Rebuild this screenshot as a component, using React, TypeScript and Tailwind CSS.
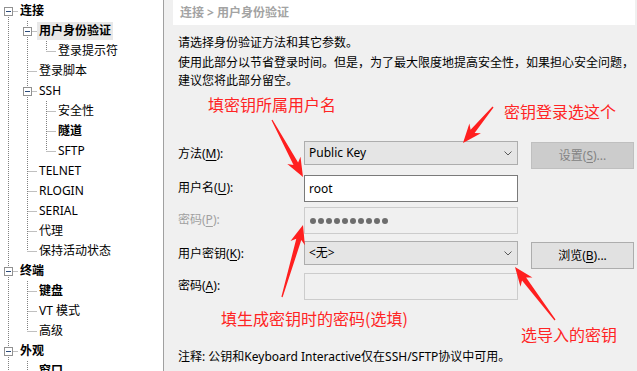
import React from "react";

type Node = { label: string; depth: number; box?: boolean; bold?: boolean; sel?: boolean };

const tree: Node[] = [
  { label: "连接", depth: 0, box: true, bold: true },
  { label: "用户身份验证", depth: 1, box: true, bold: true, sel: true },
  { label: "登录提示符", depth: 2 },
  { label: "登录脚本", depth: 1 },
  { label: "SSH", depth: 1, box: true },
  { label: "安全性", depth: 2 },
  { label: "隧道", depth: 2, bold: true },
  { label: "SFTP", depth: 2 },
  { label: "TELNET", depth: 1 },
  { label: "RLOGIN", depth: 1 },
  { label: "SERIAL", depth: 1 },
  { label: "代理", depth: 1 },
  { label: "保持活动状态", depth: 1 },
  { label: "终端", depth: 0, box: true, bold: true },
  { label: "键盘", depth: 1, bold: true },
  { label: "VT 模式", depth: 1 },
  { label: "高级", depth: 1 },
  { label: "外观", depth: 0, box: true, bold: true },
  { label: "窗口", depth: 1, bold: true },
];

// does the branch at level k still go on below row i?
function goesOn(i: number, k: number) {
  for (let j = i + 1; j < tree.length; j++) {
    if (tree[j].depth <= k) return tree[j].depth === k;
  }
  return true;
}

const dot = "#808080";

function TreeRow({ node, i }: { node: Node; i: number }) {
  const d = node.depth;
  const w = 19 * (d + 1);
  const guides = [];
  for (let k = 0; k < d; k++) {
    if (goesOn(i, k)) {
      const x = 8.5 + 19 * k;
      guides.push(<line key={k} x1={x} y1={0} x2={x} y2={20} stroke={dot} strokeDasharray="1 1" />);
    }
  }
  const x = 8.5 + 19 * d;
  return (
    <div className="flex h-[20px] items-center">
      <svg width={w} height={20} className="shrink-0">
        {guides}
        <line x1={x} y1={i === 0 ? 10 : 0} x2={x} y2={goesOn(i, d) ? 20 : 10} stroke={dot} strokeDasharray="1 1" />
        <line x1={x} y1={10.5} x2={19 * d + 18} y2={10.5} stroke={dot} strokeDasharray="1 1" />
        {node.box && (
          <g>
            <rect x={19 * d + 4.5} y={6.5} width={8} height={8} fill="#fff" stroke="#919191" />
            <line x1={19 * d + 6} y1={10.5} x2={19 * d + 11} y2={10.5} stroke="#2b4a7a" />
          </g>
        )}
      </svg>
      <span
        className={`-ml-[1px] h-[18px] whitespace-nowrap px-[2px] leading-[18px] text-black ${
          node.bold ? "font-bold" : ""
        } ${node.sel ? "bg-[#e8e8e8]" : ""}`}
      >
        {node.label}
      </span>
    </div>
  );
}

function Chevron() {
  return (
    <svg width="8" height="5" viewBox="0 0 8 5" className="shrink-0">
      <path d="M0.5 0.5 L4 4 L7.5 0.5" fill="none" stroke="#5a5a5a" />
    </svg>
  );
}

function Select({ value }: { value: string }) {
  return (
    <div className="flex h-[24px] w-[214px] items-center justify-between border border-[#adadad] bg-[#e5e5e5] pl-[4px] pr-[5px] text-black">
      <span>{value}</span>
      <Chevron />
    </div>
  );
}

function Label({ children, muted }: { children: React.ReactNode; muted?: boolean }) {
  return (
    <div className={`flex h-[26px] w-[126px] shrink-0 items-center ${muted ? "text-[#a0a0a0]" : "text-black"}`}>
      {children}
    </div>
  );
}

function Key({ k }: { k: string }) {
  return <span className="underline underline-offset-2">{k}</span>;
}

function arrow(tx: number, ty: number, px: number, py: number) {
  const dx = px - tx;
  const dy = py - ty;
  const len = Math.hypot(dx, dy);
  const ux = dx / len;
  const uy = dy / len;
  const nx = -uy;
  const ny = ux;
  const hl = 15;
  const neck = [px - ux * hl, py - uy * hl];
  const barb = [px - ux * (hl + 4), py - uy * (hl + 4)];
  const pts = [
    [tx + nx * 0.6, ty + ny * 0.6],
    [neck[0] + nx * 2.6, neck[1] + ny * 2.6],
    [barb[0] + nx * 7.5, barb[1] + ny * 7.5],
    [px, py],
    [barb[0] - nx * 7.5, barb[1] - ny * 7.5],
    [neck[0] - nx * 2.6, neck[1] - ny * 2.6],
    [tx - nx * 0.6, ty - ny * 0.6],
  ];
  return pts.map((p) => `${p[0].toFixed(1)},${p[1].toFixed(1)}`).join(" ");
}

export default function App() {
  return (
    <div
      className="relative flex h-[371px] w-[637px] overflow-hidden bg-[#f0f0f0] text-[12px]"
      style={{ fontFamily: '"Noto Sans", "Noto Sans CJK SC", sans-serif' }}
    >
      {/* tree */}
      <div className="w-[164px] shrink-0 border-r border-[#a0a0a0] bg-white pt-[1px]">
        {tree.map((n, i) => (
          <TreeRow key={i} node={n} i={i} />
        ))}
      </div>

      {/* settings */}
      <div className="min-w-0 flex-1 pl-[9px] pr-[2px]">
        <div className="flex h-[25px] items-center bg-white pl-[7px] font-bold text-[#a3a3a3]">
          连接 &gt; 用户身份验证
        </div>
        <div className="pl-[5px] leading-[18px] text-black">
          <p className="mt-[9px]">请选择身份验证方法和其它参数。</p>
          <p className="mt-[2px] whitespace-nowrap">
            使用此部分以节省登录时间。但是，为了最大限度地提高安全性，如果担心安全问题，
            <br />
            建议您将此部分留空。
          </p>

          <div className="mt-[51px] flex h-[34px] items-start">
            <Label>
              <span>
                方法(<Key k="M" />):
              </span>
            </Label>
            <Select value="Public Key" />
            <button className="ml-[13px] mt-[1px] h-[27px] w-[103px] border border-[#bfbfbf] bg-[#cccccc] text-[#838383]">
              设置(<Key k="S" />)...
            </button>
          </div>

          <div className="flex h-[32px] items-start">
            <Label>
              <span>
                用户名(<Key k="U" />):
              </span>
            </Label>
            <div className="flex h-[27px] w-[214px] items-center border border-[#7a7a7a] bg-white pl-[4px]">root</div>
          </div>

          <div className="flex h-[34px] items-start">
            <Label muted>
              <span>
                密码(<Key k="P" />):
              </span>
            </Label>
            <div className="flex h-[27px] w-[214px] items-center gap-[2px] border border-[#cccccc] bg-[#f0f0f0] pl-[5px]">
              {Array.from({ length: 10 }).map((_, i) => (
                <span key={i} className="h-[6px] w-[6px] rounded-full bg-[#6d6d6d]" />
              ))}
            </div>
          </div>

          <div className="flex h-[32px] items-start">
            <Label>
              <span>
                用户密钥(<Key k="K" />):
              </span>
            </Label>
            <Select value="<无>" />
            <button className="ml-[13px] mt-[1px] h-[27px] w-[103px] border border-[#adadad] bg-[#e1e1e1] text-black">
              浏览(<Key k="B" />)...
            </button>
          </div>

          <div className="flex h-[27px] items-start">
            <Label>
              <span>
                密码(<Key k="A" />):
              </span>
            </Label>
            <div className="h-[27px] w-[214px] border border-[#cccccc] bg-[#f0f0f0]" />
          </div>

          <p className="mt-[48px]">注释: 公钥和Keyboard Interactive仅在SSH/SFTP协议中可用。</p>
        </div>
      </div>

      {/* red annotations drawn over the dialog */}
      <div
        className="pointer-events-none absolute inset-0 text-[16px] leading-[20px] text-[#ff2424]"
        style={{ fontFamily: '"Noto Sans CJK SC", sans-serif' }}
      >
        <span className="absolute left-[208px] top-[94px]">填密钥所属用户名</span>
        <span className="absolute left-[504px] top-[101px]">密钥登录选这个</span>
        <span className="absolute left-[221px] top-[308px]">填生成密钥时的密码(选填)</span>
        <span className="absolute left-[521px] top-[324px]">选导入的密钥</span>
        <svg width="637" height="371" className="absolute left-0 top-0">
          <polygon points={arrow(272, 120, 303, 177)} fill="#ff1f1f" />
          <polygon points={arrow(493, 107, 463, 143)} fill="#ff1f1f" />
          <polygon points={arrow(282, 297, 303, 225)} fill="#ff1f1f" />
          <polygon points={arrow(555, 320, 515, 267)} fill="#ff1f1f" />
        </svg>
      </div>
    </div>
  );
}
